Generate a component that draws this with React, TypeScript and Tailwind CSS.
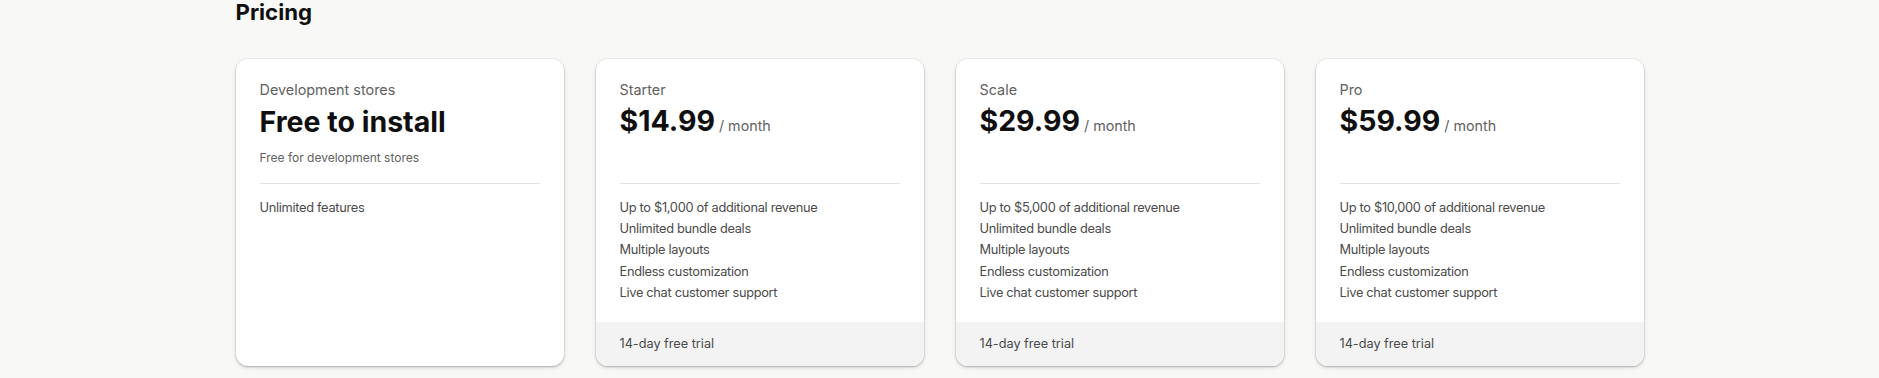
import React from "react";

type Plan = {
  label: string;
  title?: string;
  price?: string;
  subtitle?: string;
  features: string[];
  trial?: string;
};

const plans: Plan[] = [
  {
    label: "Development stores",
    title: "Free to install",
    subtitle: "Free for development stores",
    features: ["Unlimited features"],
  },
  {
    label: "Starter",
    price: "$14.99",
    features: [
      "Up to $1,000 of additional revenue",
      "Unlimited bundle deals",
      "Multiple layouts",
      "Endless customization",
      "Live chat customer support",
    ],
    trial: "14-day free trial",
  },
  {
    label: "Scale",
    price: "$29.99",
    features: [
      "Up to $5,000 of additional revenue",
      "Unlimited bundle deals",
      "Multiple layouts",
      "Endless customization",
      "Live chat customer support",
    ],
    trial: "14-day free trial",
  },
  {
    label: "Pro",
    price: "$59.99",
    features: [
      "Up to $10,000 of additional revenue",
      "Unlimited bundle deals",
      "Multiple layouts",
      "Endless customization",
      "Live chat customer support",
    ],
    trial: "14-day free trial",
  },
];

function Card({ plan }: { plan: Plan }) {
  return (
    <div className="flex flex-col overflow-hidden rounded-xl bg-white shadow-[0_0_0_1px_rgba(0,0,0,0.04),0_1px_2px_rgba(0,0,0,0.2),0_2px_5px_rgba(0,0,0,0.1)]">
      <div className="flex flex-1 flex-col px-6 pt-[21px]">
        <div className="h-[104px] border-b border-[#e3e3e3]">
          <div className="text-[14.4px] leading-[20px] text-[#616161]">{plan.label}</div>
          {plan.title ? (
            <>
              <div className="mt-[4px] text-[28.5px] font-bold leading-[36px] text-[#0f0f0f]">
                {plan.title}
              </div>
              <div className="mt-[10px] text-[12px] leading-[16px] text-[#616161]">
                {plan.subtitle}
              </div>
            </>
          ) : (
            <div className="mt-[3px] flex items-baseline gap-[4px]">
              <span className="text-[28.5px] font-bold leading-[36px] text-[#0f0f0f]">
                {plan.price}
              </span>
              <span className="text-[14.3px] text-[#616161]">/ month</span>
            </div>
          )}
        </div>
        <ul className="flex flex-col pt-[13px] pb-[19px]">
          {plan.features.map((f) => (
            <li
              key={f}
              className="text-[12.8px] leading-[21.2px] tracking-[-0.3px] text-[#4a4a4a]"
            >
              {f}
            </li>
          ))}
        </ul>
      </div>
      {plan.trial && (
        <div className="flex h-[44px] items-center bg-[#f3f3f3] px-6 text-[12.7px] leading-[20px] text-[#4a4a4a]">
          {plan.trial}
        </div>
      )}
    </div>
  );
}

export default function App() {
  return (
    <div
      className="min-h-[378px] w-full bg-[#f8f8f7]"
      style={{ fontFamily: "Inter, 'Noto Sans', sans-serif" }}
    >
      <div className="mx-auto w-[1408px]">
        <h2 className="text-[22.2px] font-bold leading-[24px] text-[#0f0f0f]">Pricing</h2>
        <div className="mt-[35px] grid grid-cols-4 gap-8">
          {plans.map((p) => (
            <Card key={p.label} plan={p} />
          ))}
        </div>
      </div>
    </div>
  );
}
